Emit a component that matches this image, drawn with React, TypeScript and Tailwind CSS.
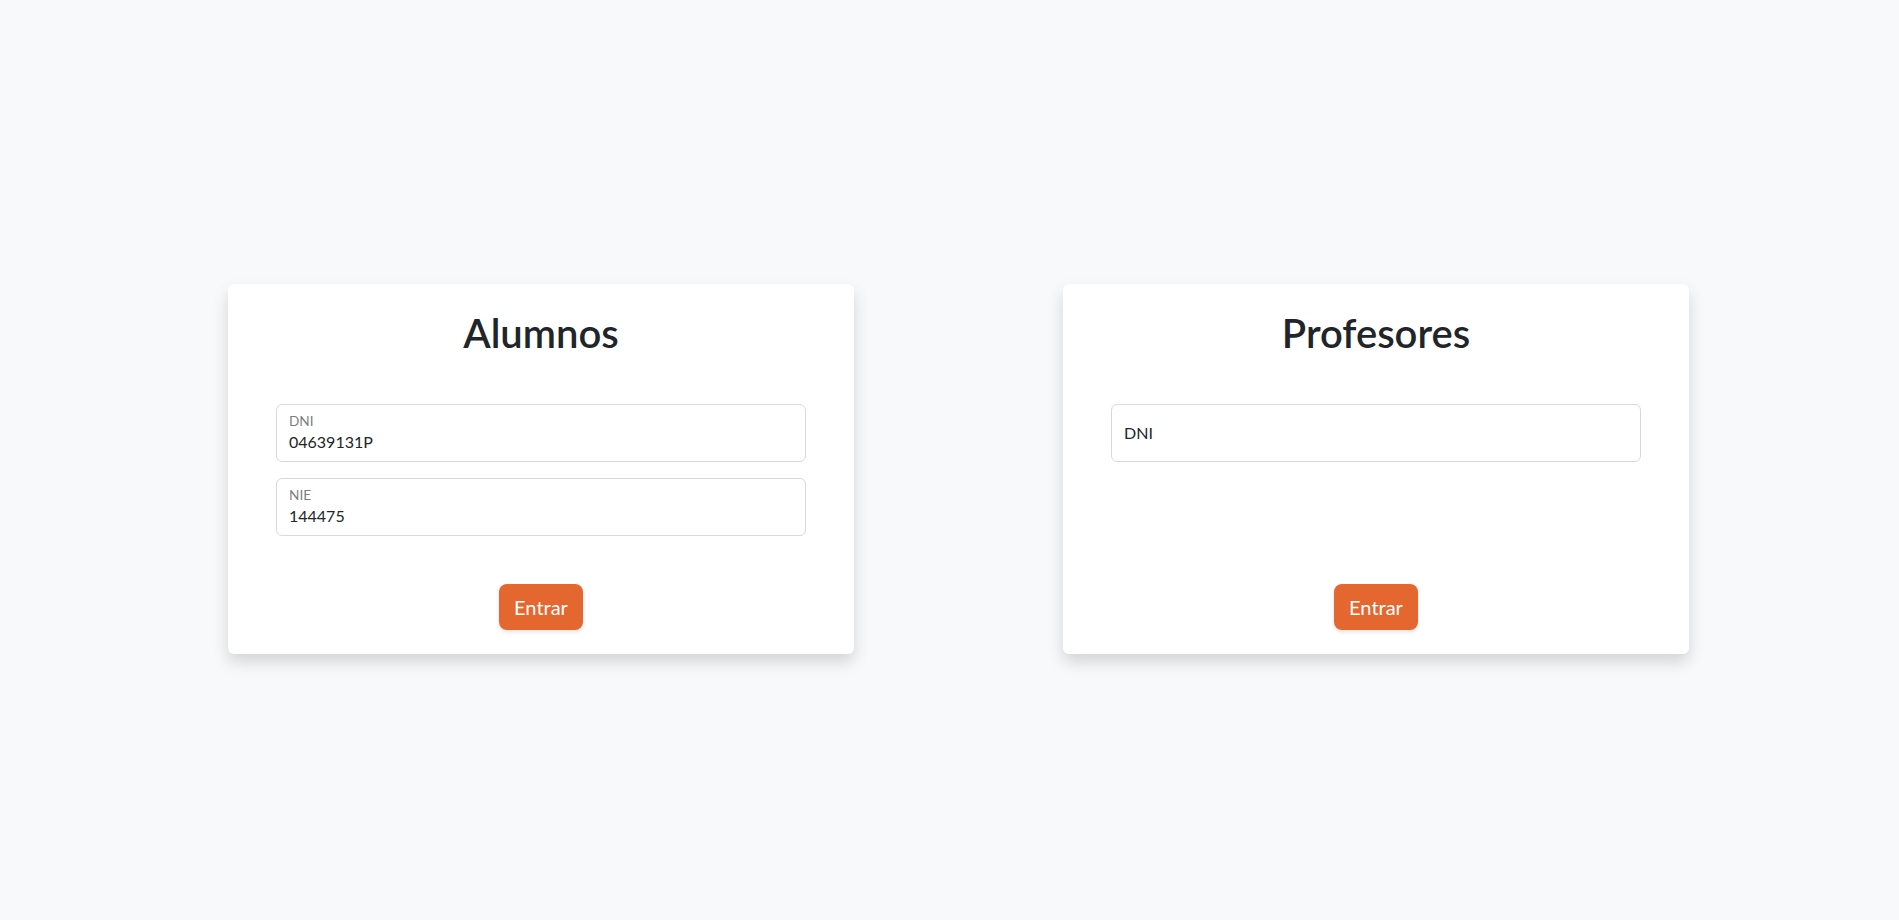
import React from "react";

function Field({ label, value }: { label: string; value?: string }) {
  if (value === undefined) {
    return (
      <div className="h-[58px] w-full rounded-[6px] border border-[#d6dade] bg-white px-[12px] flex items-center">
        <span className="text-[16px] leading-[24px] text-[#212529]">{label}</span>
      </div>
    );
  }
  return (
    <div className="h-[58px] w-full rounded-[6px] border border-[#d6dade] bg-white px-[12px] pt-[8px] flex flex-col">
      <span className="text-[13.6px] leading-[16px] text-[#7b7e81]">{label}</span>
      <span className="mt-px text-[16px] leading-[24px] text-[#212529]">{value}</span>
    </div>
  );
}

function Card({ title, children }: { title: string; children: React.ReactNode }) {
  return (
    <div className="w-[626px] bg-white rounded-[6px] shadow-[0_8px_16px_rgba(0,0,0,0.15)] flex flex-col items-center pt-[25px] pb-6 px-12">
      <h1 className="text-[40px] leading-[48px] font-semibold text-[#212529]">{title}</h1>
      <div className="w-full mt-[47px] flex flex-col gap-4">{children}</div>
      <button className="mt-auto w-[84px] h-[46px] rounded-[8px] bg-[#e3672f] text-white text-[20px] leading-[30px] shadow-[0_2px_4px_rgba(0,0,0,0.12)] flex items-center justify-center">
        Entrar
      </button>
    </div>
  );
}

export default function App() {
  return (
    <div className="min-h-screen w-full bg-[#f8f9fa] font-['Lato','Noto_Sans',sans-serif]">
      <div className="flex items-stretch pt-[284px] pl-[228px] gap-[209px]">
        <Card title="Alumnos">
          <Field label="DNI" value="04639131P" />
          <Field label="NIE" value="144475" />
          <div className="h-[32px]" />
        </Card>
        <Card title="Profesores">
          <Field label="DNI" />
        </Card>
      </div>
    </div>
  );
}
